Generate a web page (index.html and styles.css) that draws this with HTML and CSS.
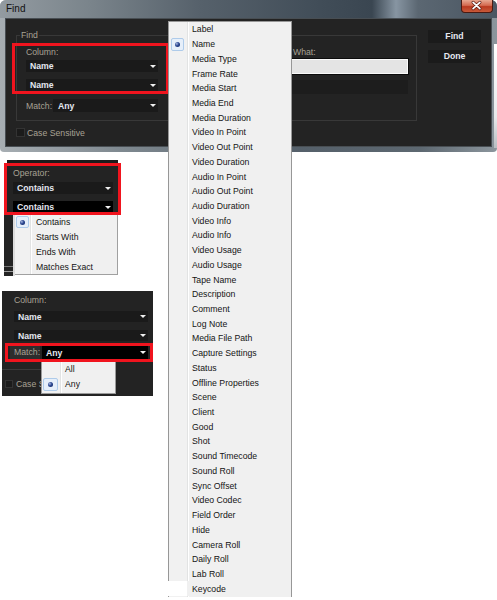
FILE: index.html
```html
<!DOCTYPE html>
<html>
<head>
<meta charset="utf-8">
<link rel="stylesheet" href="styles.css">
</head>
<body>
<div class="window">
  <div class="titlebar">
    <span class="title">Find</span>
    <span class="close"><svg width="32" height="13" viewBox="0 0 32 13"><path d="M12.5 3.2 L19.5 9.8 M19.5 3.2 L12.5 9.8" stroke="#5a1a10" stroke-width="3.2" stroke-linecap="round"/><path d="M12.5 3.2 L19.5 9.8 M19.5 3.2 L12.5 9.8" stroke="#fff" stroke-width="1.8" stroke-linecap="round"/></svg></span>
  </div>
  <div class="client">
    <div class="main">
      <div class="group">
        <div class="legend">Find</div>
        <div class="group-row">
          <div class="col-left">
            <div class="label">Column:</div>
            <div class="sel sel-a"><span>Name</span><i class="arrow"></i></div>
            <div class="sel sel-b"><span>Name</span><i class="arrow"></i></div>
            <div class="match-row">
              <span class="label match-label">Match:</span>
              <div class="sel sel-match"><span>Any</span><i class="arrow"></i></div>
            </div>
          </div>
          <div class="col-right">
            <div class="label what">What:</div>
            <div class="input"></div>
            <div class="field"></div>
          </div>
        </div>
      </div>
      <div class="check-row"><span class="checkbox"></span><span class="label">Case Sensitive</span></div>
    </div>
    <div class="buttons">
      <div class="btn">Find</div>
      <div class="btn">Done</div>
    </div>
  </div>
  <div class="redmark"></div>
  <div class="rightedge"></div>
</div>

<div class="snip-op">
  <div class="strip"></div>
  <div class="redbox op-red">
    <div class="label">Operator:</div>
    <div class="sel op-sel"><span>Contains</span><i class="arrow"></i></div>
    <div class="sel op-sel black"><span>Contains</span><i class="arrow"></i></div>
  </div>
  <div class="op-below">
    <div class="darkcol"></div>
    <div class="lightgap"></div>
    <div class="menu op-menu">
      <div class="item"><span class="mark"><span class="rbox"><span class="dot"></span></span></span><span class="txt">Contains</span></div>
      <div class="item"><span class="mark"></span><span class="txt">Starts With</span></div>
      <div class="item"><span class="mark"></span><span class="txt">Ends With</span></div>
      <div class="item"><span class="mark"></span><span class="txt">Matches Exact</span></div>
    </div>
  </div>
</div>

<div class="snip-match">
  <div class="label col-label">Column:</div>
  <div class="sel m-sel m-sel-a"><span>Name</span><i class="arrow"></i></div>
  <div class="sel m-sel m-sel-b"><span>Name</span><i class="arrow"></i></div>
  <div class="redbox m-red">
    <span class="label m-label">Match:</span>
    <div class="sel black m-any"><span>Any</span><i class="arrow"></i></div>
  </div>
  <div class="m-below">
    <div class="m-left">
      <div class="hr"></div>
      <div class="m-check"><span class="checkbox small"></span><span class="label">Case Sensitive</span></div>
    </div>
    <div class="menu m-menu">
      <div class="item"><span class="mark"></span><span class="txt">All</span></div>
      <div class="item"><span class="mark"><span class="rbox"><span class="dot"></span></span></span><span class="txt">Any</span></div>
    </div>
  </div>
</div>

<div class="menu big-menu">
  <div class="item"><span class="mark"></span><span class="txt">Label</span></div>
  <div class="item"><span class="mark"><span class="rbox"><span class="dot"></span></span></span><span class="txt">Name</span></div>
  <div class="item"><span class="mark"></span><span class="txt">Media Type</span></div>
  <div class="item"><span class="mark"></span><span class="txt">Frame Rate</span></div>
  <div class="item"><span class="mark"></span><span class="txt">Media Start</span></div>
  <div class="item"><span class="mark"></span><span class="txt">Media End</span></div>
  <div class="item"><span class="mark"></span><span class="txt">Media Duration</span></div>
  <div class="item"><span class="mark"></span><span class="txt">Video In Point</span></div>
  <div class="item"><span class="mark"></span><span class="txt">Video Out Point</span></div>
  <div class="item"><span class="mark"></span><span class="txt">Video Duration</span></div>
  <div class="item"><span class="mark"></span><span class="txt">Audio In Point</span></div>
  <div class="item"><span class="mark"></span><span class="txt">Audio Out Point</span></div>
  <div class="item"><span class="mark"></span><span class="txt">Audio Duration</span></div>
  <div class="item"><span class="mark"></span><span class="txt">Video Info</span></div>
  <div class="item"><span class="mark"></span><span class="txt">Audio Info</span></div>
  <div class="item"><span class="mark"></span><span class="txt">Video Usage</span></div>
  <div class="item"><span class="mark"></span><span class="txt">Audio Usage</span></div>
  <div class="item"><span class="mark"></span><span class="txt">Tape Name</span></div>
  <div class="item"><span class="mark"></span><span class="txt">Description</span></div>
  <div class="item"><span class="mark"></span><span class="txt">Comment</span></div>
  <div class="item"><span class="mark"></span><span class="txt">Log Note</span></div>
  <div class="item"><span class="mark"></span><span class="txt">Media File Path</span></div>
  <div class="item"><span class="mark"></span><span class="txt">Capture Settings</span></div>
  <div class="item"><span class="mark"></span><span class="txt">Status</span></div>
  <div class="item"><span class="mark"></span><span class="txt">Offline Properties</span></div>
  <div class="item"><span class="mark"></span><span class="txt">Scene</span></div>
  <div class="item"><span class="mark"></span><span class="txt">Client</span></div>
  <div class="item"><span class="mark"></span><span class="txt">Good</span></div>
  <div class="item"><span class="mark"></span><span class="txt">Shot</span></div>
  <div class="item"><span class="mark"></span><span class="txt">Sound Timecode</span></div>
  <div class="item"><span class="mark"></span><span class="txt">Sound Roll</span></div>
  <div class="item"><span class="mark"></span><span class="txt">Sync Offset</span></div>
  <div class="item"><span class="mark"></span><span class="txt">Video Codec</span></div>
  <div class="item"><span class="mark"></span><span class="txt">Field Order</span></div>
  <div class="item"><span class="mark"></span><span class="txt">Hide</span></div>
  <div class="item"><span class="mark"></span><span class="txt">Camera Roll</span></div>
  <div class="item"><span class="mark"></span><span class="txt">Daily Roll</span></div>
  <div class="item"><span class="mark"></span><span class="txt">Lab Roll</span></div>
  <div class="item last"><span class="mark"></span><span class="txt">Keycode</span></div>
</div>
</body>
</html>
```

FILE: styles.css
```css
* { box-sizing: border-box; }
body {
  margin: 0;
  width: 497px;
  height: 600px;
  overflow: hidden;
  position: relative;
  background: #fff;
  font-family: "Liberation Sans", Arial, sans-serif;
  font-size: 8.7px;
  line-height: 10px;
}

/* ---------- window ---------- */
.window {
  width: 497px;
  height: 152px;
  position: relative;
  display: flex;
  flex-direction: column;
  border-radius: 6px 6px 4px 4px;
  background: linear-gradient(90deg, #a7aeb3 0, #7f8990 120px, #55606a 300px, #5d6871 420px, #8c969d 497px);
}
.titlebar {
  height: 18px;
  flex: none;
  display: flex;
  align-items: flex-start;
  border-radius: 6px 6px 0 0;
  background: linear-gradient(90deg, #939ba1 0, #7a848b 90px, #56616b 200px, #414d58 320px, #3a4651 372px, #8795a2 396px, #5b6772 418px, #4a5662 497px);
}
.title {
  margin: 4px 0 0 6px;
  font-size: 10px;
  line-height: 10px;
  color: #111;
}
.close {
  margin-left: auto;
  margin-right: 4px;
  width: 32px;
  height: 13px;
  border: 1px solid #4a1a12;
  border-top: none;
  border-radius: 0 0 4px 4px;
  background: linear-gradient(#e7a892 0, #d46a50 45%, #b93a20 55%, #c85a3a 100%);
  display: flex;
}
.close svg { margin: -1px 0 0 -1px; display: block; }

.client {
  flex: none;
  height: 129px;
  margin: 0 5px;
  background: #232323;
  border: 1px solid #484e53;
  display: flex;
  padding: 11px 0 0 10px;
}
.main { width: 401px; flex: none; }
.group {
  margin-top: 5px;
  height: 86px;
  border: 1px solid #383838;
}
.legend {
  width: max-content;
  margin: -6px 0 0 3px;
  padding: 0 1px;
  background: #232323;
  color: #a8a294;
}
.group-row {
  display: flex;
  margin-top: 7px;
  padding-left: 9px;
}
.label { color: #a8a294; white-space: nowrap; }
.col-left { width: 132px; flex: none; }
.col-right { width: 118px; flex: none; margin-left: 132px; }

.sel {
  display: flex;
  align-items: center;
  justify-content: space-between;
  background: #1a1a1a;
  color: #e4e7f0;
  font-weight: bold;
  padding: 0 2px 0 4px;
  white-space: nowrap;
}
.sel.black { background: #000; }
.arrow {
  width: 0;
  height: 0;
  border-left: 3px solid transparent;
  border-right: 3px solid transparent;
  border-top: 3px solid #f0f0f0;
}
.sel-a { margin-top: 3px; height: 12px; }
.sel-b { margin-top: 7px; height: 12px; }
.match-row { display: flex; align-items: center; margin-top: 8px; height: 13px; }
.match-label { width: 27px; flex: none; }
.sel-match { width: 105px; height: 13px; padding-left: 5px; }

.what { padding-left: 3px; }
.input {
  margin-top: 2px;
  height: 15px;
  background: #e4e4e4;
  border: 1px solid #fafafa;
  outline: 1px solid #0c0c0c;
}
.field { margin-top: 6px; height: 14px; background: #1d1d1d; }

.check-row { display: flex; align-items: center; margin-top: 7px; height: 9px; }
.checkbox {
  width: 9px;
  height: 9px;
  flex: none;
  background: #1b1b1b;
  border: 1px solid #333;
  margin-right: 2px;
}

.buttons { margin-left: 11px; width: 53px; display: flex; flex-direction: column; gap: 7px; }
.btn {
  height: 13px;
  background: #1b1b1b;
  color: #e6e8f0;
  font-weight: bold;
  text-align: center;
  line-height: 13px;
}

.redmark {
  position: absolute;
  left: 12px;
  top: 43px;
  width: 157px;
  height: 51px;
  border: 3px solid #f0141e;
}
.rightedge {
  position: absolute;
  right: 0;
  top: 44px;
  width: 3px;
  height: 104px;
  background: linear-gradient(#ffffff, #e8eaec 70%, #b8bec2);
}

/* ---------- menus ---------- */
.menu {
  --g: 18px;
  --t: 23px;
  background: linear-gradient(90deg, #f1f1f1 0 var(--g), #e2e3e3 var(--g) calc(var(--g) + 1px), #ffffff calc(var(--g) + 1px) calc(var(--g) + 2px), #f0f0f0 calc(var(--g) + 2px));
  color: #141414;
}
.item {
  display: flex;
  align-items: center;
  height: 14.72px;
  white-space: nowrap;
}
.mark {
  width: var(--t);
  flex: none;
  height: 100%;
  display: flex;
  align-items: center;
  padding-left: 2px;
}
.rbox {
  width: 13px;
  height: 13px;
  border: 1px solid #aecbea;
  border-radius: 2px;
  background: #e6effa;
  display: flex;
  align-items: center;
  justify-content: center;
}
.dot {
  width: 5px;
  height: 5px;
  border-radius: 50%;
  background: radial-gradient(circle at 35% 35%, #a8b8e0 0, #2a4690 45%, #0f2260 100%);
}

.big-menu {
  position: absolute;
  left: 168px;
  top: 21px;
  width: 124px;
  height: 576px;
  border: 1px solid #979797;
  border-bottom: none;
  --g: 18px;
  --t: 23px;
}
.big-menu .item.last {
  margin-left: -1px;
  background: linear-gradient(90deg, #fff 0 19px, #f0f0f0 19px);
}
.big-menu .item.last .mark { width: 24px; }

/* ---------- operator snippet ---------- */
.snip-op { margin: 8px 0 0 4px; width: 117px; }
.strip { margin-left: 3px; width: 111px; height: 3px; background: #1c1c1c; }
.redbox { border: 3px solid #f0141e; background: #232323; }
.op-red {
  height: 52px;
  overflow: hidden;
  padding: 2px 0 0 6px;
}
.op-sel { width: 100px; height: 12px; margin-top: 4px; font-weight: bold; }
.op-sel + .op-sel { margin-top: 7px; }
.op-below { display: flex; height: 61px; }
.darkcol {
  width: 9px;
  background: linear-gradient(#232323 0 51px, #777 51px 52px, #232323 52px 56px, #999 56px 57px, #232323 57px);
}
.lightgap { width: 2px; background: #dcdcdc; }
.op-menu {
  width: 103px;
  height: 60px;
  border-right: 1px solid #a0a0a0;
  border-bottom: 1px solid #a0a0a0;
  --g: 15px;
  --t: 21px;
}
.op-menu .mark { padding-left: 1px; }
.op-menu .rbox { height: 12px; }

/* ---------- match snippet ---------- */
.snip-match {
  margin: 15px 0 0 2px;
  width: 151px;
  height: 105px;
  background: #232323;
  display: flex;
  flex-direction: column;
}
.col-label { padding: 4px 0 0 12px; }
.m-sel { width: 134px; height: 11px; margin-left: 12px; }
.m-sel-a { margin-top: 6px; }
.m-sel-b { margin-top: 8px; }
.m-red {
  margin: 2px 0 0 3px;
  width: 148px;
  height: 19px;
  display: flex;
  align-items: stretch;
  padding-left: 2px;
}
.m-label {
  width: 30px;
  background: #2d2d2d;
  padding-left: 4px;
  line-height: 13px;
}
.m-any { width: 106px; margin-left: 2px; padding-left: 4px; }
.m-below { display: flex; height: 34px; }
.m-left { width: 39px; overflow: hidden; }
.hr { margin-top: 7px; height: 1px; background: #3a3a3a; }
.m-check { display: flex; align-items: center; margin-top: 9px; padding-left: 3px; }
.checkbox.small { width: 8px; height: 8px; margin-right: 3px; }
.m-menu {
  width: 75px;
  height: 32px;
  border: 1px solid #9a9a9a;
  border-top: none;
  --g: 18px;
  --t: 23px;
}
.m-menu .mark { padding-left: 1px; }
.m-menu .rbox { width: 15px; }
```
